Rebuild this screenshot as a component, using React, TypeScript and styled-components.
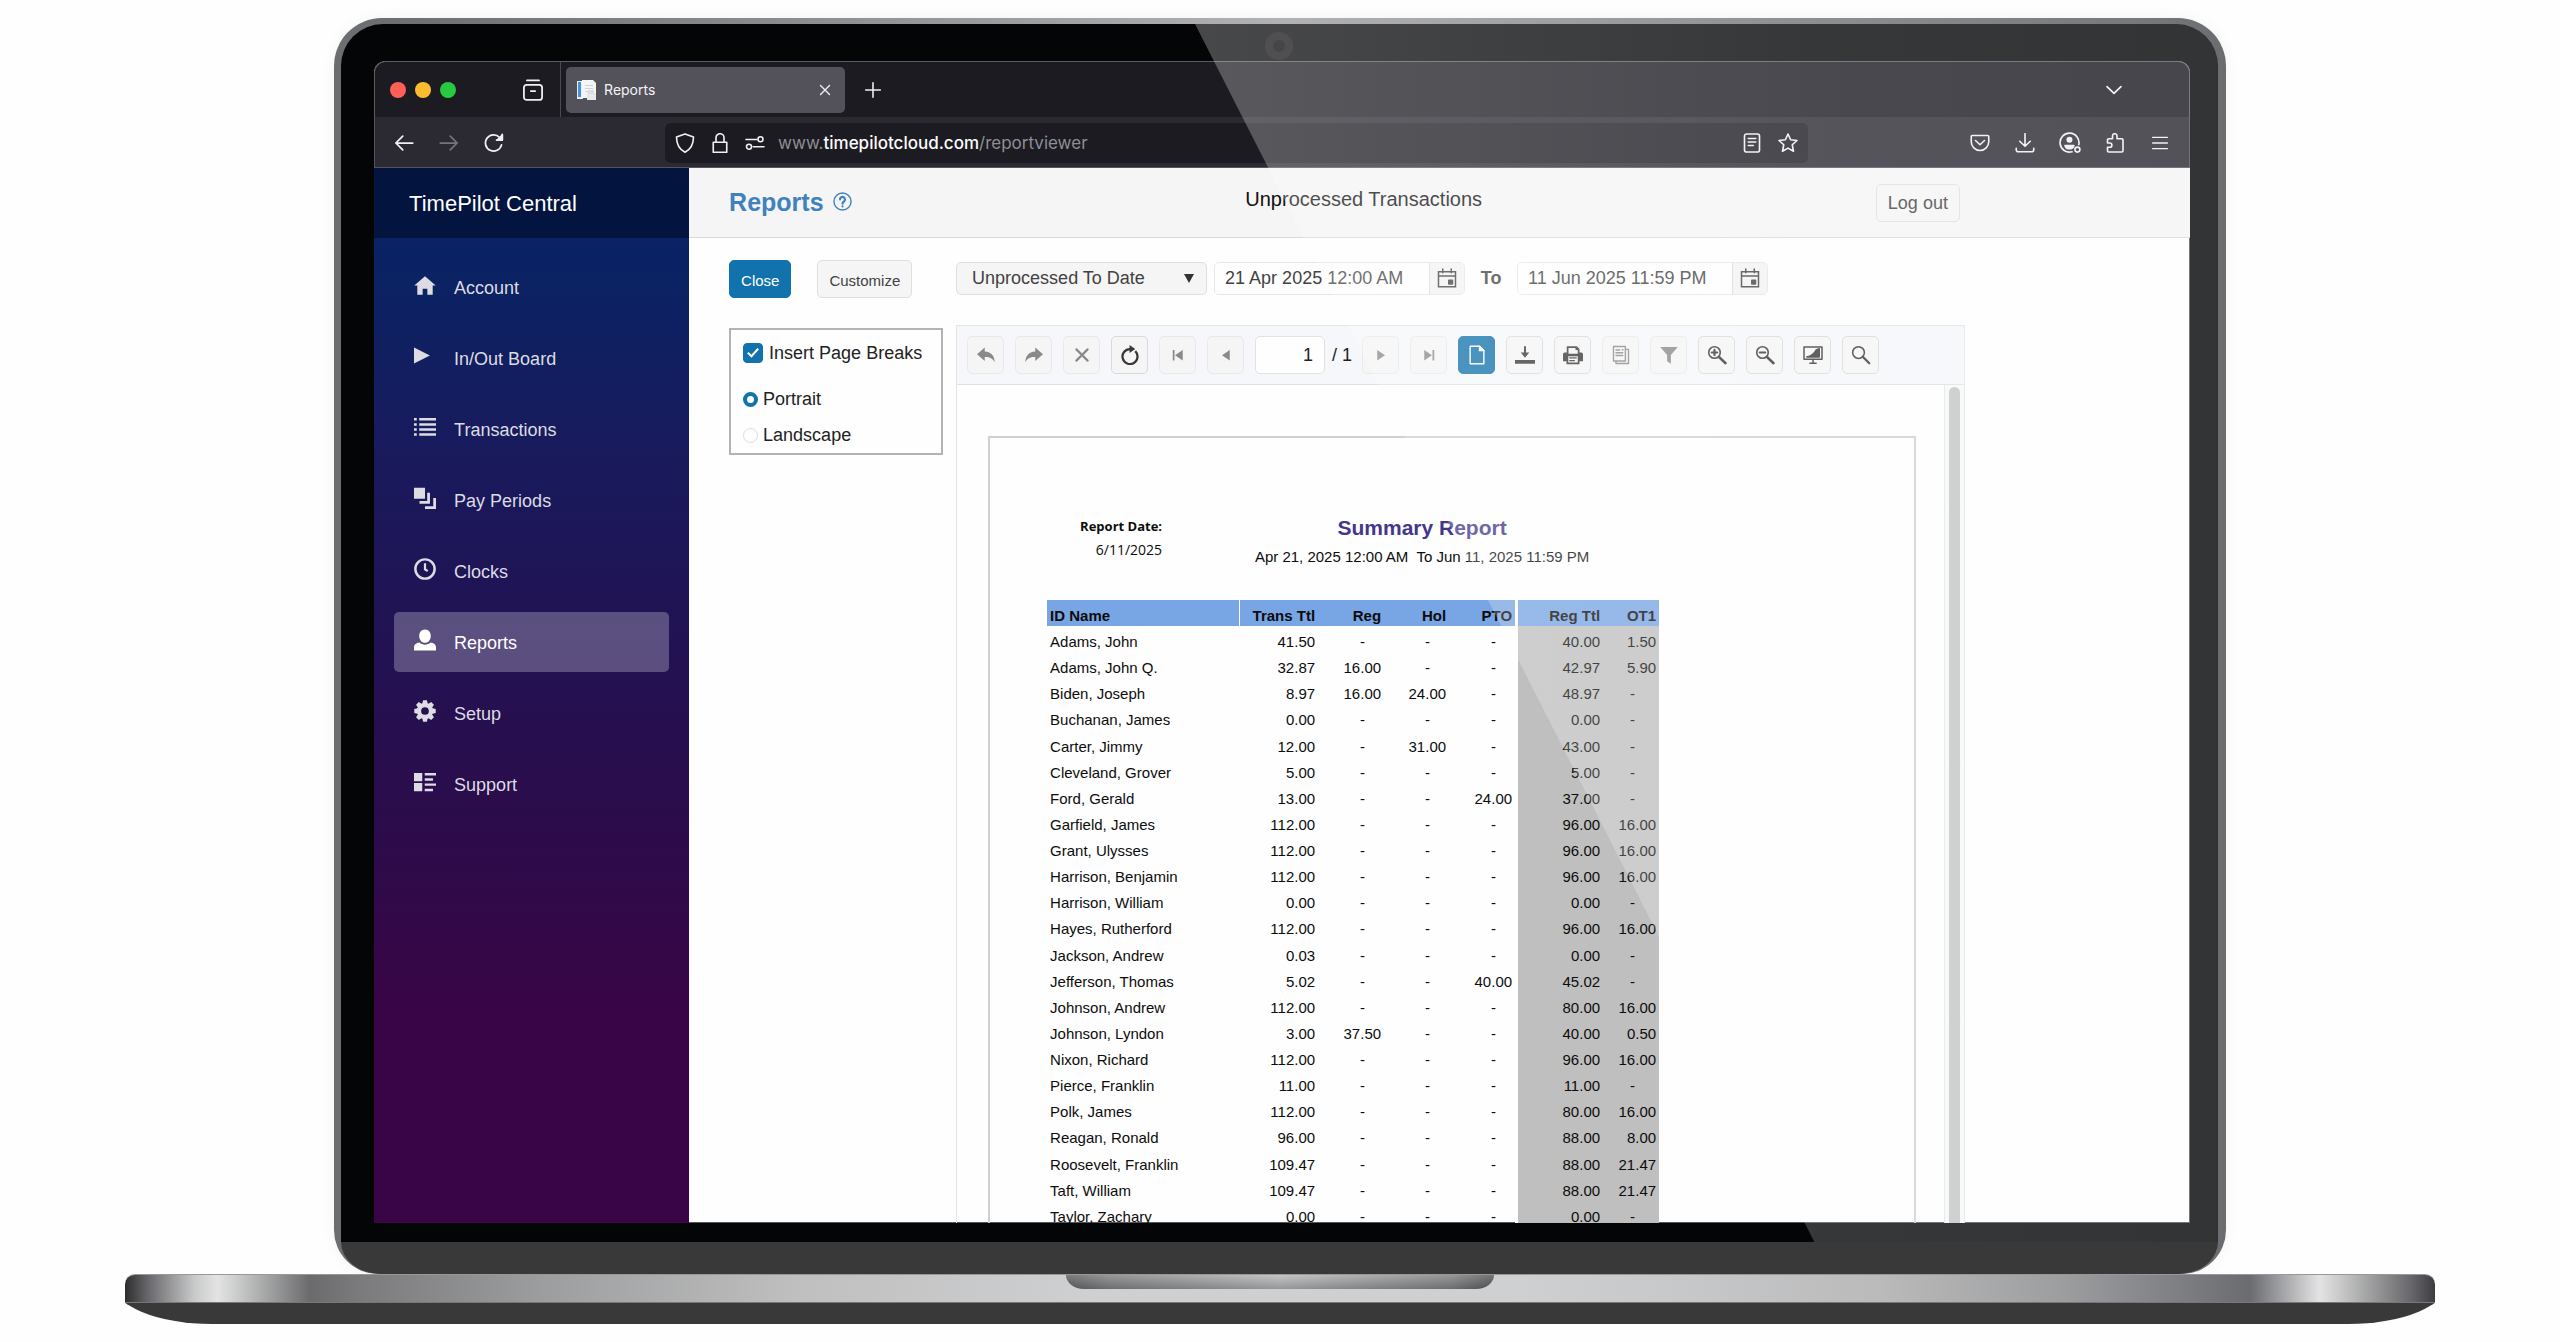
import React, { useState } from "react";
import styled, { createGlobalStyle, css } from "styled-components";

const sans = `"Liberation Sans", Arial, Helvetica, sans-serif`;
const chromeFont = `Inter, "Liberation Sans", sans-serif`;

const GlobalStyle = createGlobalStyle`
  *, *::before, *::after { box-sizing: border-box; }
  html, body { margin: 0; padding: 0; }
  body { background: #fefefe; font-family: ${sans}; color: #222; overflow: hidden; }
  button, input, select { font: inherit; color: inherit; margin: 0; }
  button { cursor: pointer; padding: 0; }
  a { color: inherit; text-decoration: none; }
`;

/* ---------- Laptop ---------- */

const Stage = styled.div`
  height: 100vh;
  min-height: 600px;
  padding: 18px 0;
  display: flex;
  flex-direction: column;
  align-items: center;
`;

const Lid = styled.div`
  flex: 1;
  min-height: 0;
  width: 73.9%;
  display: flex;
  flex-direction: column;
  padding: 6px 8px 0 7px;
  border-radius: 48px 48px 44px 44px;
  background: linear-gradient(90deg, #6b6d71 0%, #6f7073 4%, #b2b2b3 50%, #77787b 96%, #6b6c70 100%);
  box-shadow: 0 0 14px rgba(0, 0, 0, 0.05);
`;

const Panel = styled.div`
  position: relative;
  flex: 1;
  min-height: 0;
  display: flex;
  padding: 37px 28px 19px 33px;
  border-radius: 42px 42px 0 0;
  background: #040507;
`;

const Hinge = styled.div`
  height: 32px;
  background: #393939;
  border-radius: 0 0 40px 40px / 0 0 32px 32px;
`;

const Camera = styled.div`
  position: absolute;
  left: 50%;
  top: 8px;
  width: 28px;
  height: 28px;
  margin-left: -14px;
  border-radius: 50%;
  border: 8px solid #121216;
  background: #050508;
`;

const Glare = styled.div`
  position: absolute;
  inset: 0;
  z-index: 5;
  pointer-events: none;
  border-radius: 0 42px 0 0;
  background: linear-gradient(90deg, rgba(254, 254, 254, 0.27) 45%, rgba(252, 253, 254, 0.2) 80%, rgba(252, 253, 254, 0.19) 100%);
  clip-path: polygon(45.5% 0, 100% 0, 100% 100%, 78.5% 100%);
`;

const Base = styled.div`
  position: relative;
  width: 90.2%;
  height: 29px;
  border-radius: 10px 10px 0 0;
  border-top: 1px solid #98989a;
  border-bottom: 1px solid #77777a;
  background: linear-gradient(
    90deg,
    #2d2d2e 0%, #68686c 1%, #c8c9c9 3%, #e3e3e3 4%, #c6c8c7 5%, #6b6b6e 8%, #7a7a7d 10%, #9c9d9f 18%,
    #bfbfbf 29%, #cfd0d2 42%, #cfd0d2 60%, #c6c7c9 68%, #bababa 76%, #9c9d9f 84%, #6b6c70 92%,
    #e3e3e5 95%, #c5c6c5 96%, #66666a 99%, #3d3c41 100%
  );
  display: flex;
  justify-content: center;
`;

const Notch = styled.div`
  width: 428px;
  height: 14px;
  border-radius: 0 0 18px 18px / 0 0 14px 14px;
  background: linear-gradient(180deg, rgba(255, 255, 255, 0.12), rgba(0, 0, 0, 0.2)),
    linear-gradient(90deg, #68696c 0%, #88898b 10%, #bcbdbf 50%, #88898b 90%, #5f6063 100%);
`;

const Underside = styled.div`
  position: relative;
  width: 90.2%;
  height: 21px;
  overflow: hidden;
  &::before {
    content: "";
    position: absolute;
    inset: -21px -13px 0;
    background: #393939;
    border-radius: 0 0 100px 100px / 0 0 42px 42px;
  }
`;

/* ---------- Browser ---------- */

const Browser = styled.div`
  flex: 1;
  min-width: 0;
  display: flex;
  flex-direction: column;
  overflow: hidden;
  border-radius: 12px 12px 0 0;
  background: #fefefe;
  box-shadow: inset 0 0 0 1px #55555c;
`;

const TabStrip = styled.div`
  height: 56px;
  flex: none;
  display: flex;
  align-items: center;
  background: #1c1b22;
  border: 1px solid #5b5b61;
  border-bottom: 0;
  border-radius: 12px 12px 0 0;
  color: #f4f4f6;
  font-family: ${chromeFont};
`;

const Lights = styled.div`
  display: flex;
  gap: 9px;
  width: 132px;
  padding-left: 15px;
`;

const Light = styled.span<{ $c: string }>`
  width: 16px;
  height: 16px;
  border-radius: 50%;
  background: ${(p) => p.$c};
`;

const ChromeButton = styled.button<{ $dim?: boolean; $w?: number }>`
  width: ${(p) => p.$w ?? 45}px;
  height: 36px;
  flex: none;
  display: flex;
  align-items: center;
  justify-content: center;
  border: 0;
  background: none;
  color: ${(p) => (p.$dim ? "#75747c" : "#f0f0f3")};
`;

const TabDivider = styled.span`
  align-self: stretch;
  width: 1px;
  margin-left: 2px;
  background: #4b4a52;
`;

const Tab = styled.div`
  display: flex;
  align-items: center;
  width: 279px;
  height: 46px;
  margin: 0 5px;
  padding: 0 2px 0 10px;
  border-radius: 5px;
  background: #53525b;
  font-size: 14px;
  span { flex: 1; margin-left: 7px; }
`;

const Spacer = styled.div`
  flex: 1;
`;

const NavBar = styled.div`
  height: 51px;
  flex: none;
  display: flex;
  align-items: center;
  padding-top: 1px;
  background: #2b2a33;
  border: solid #55545c;
  border-width: 0 1px 1px;
  color: #f0f0f3;
  font-family: ${chromeFont};
`;

const NavGroup = styled.div`
  display: flex;
  width: 290px;
  padding-left: 6px;
`;

const UrlBar = styled.div`
  flex: 1;
  display: flex;
  align-items: center;
  height: 40px;
  padding: 0 2px;
  border-radius: 6px;
  background: #1c1b22;
`;

const Url = styled.div`
  flex: 1;
  margin-left: 6px;
  font-size: 17px;
  color: #8f8e96;
  b { font-weight: 500; color: #fbfbfe; }
`;

const ToolGroup = styled.div`
  display: flex;
  justify-content: flex-end;
  width: 381px;
  padding-right: 6px;
`;

/* ---------- App shell ---------- */

const Page = styled.div`
  flex: 1;
  min-height: 0;
  display: flex;
`;

const Sidebar = styled.aside`
  width: 21%;
  max-width: 315px;
  min-width: 260px;
  display: flex;
  flex-direction: column;
  color: #dcdce2;
  background: linear-gradient(180deg, #062466 0%, #0c2263 12%, #171b5d 25%, #221253 45%, #2c0c4b 62%, #390546 80%, #390546 100%);
`;

const Brand = styled.div`
  height: 70px;
  flex: none;
  display: flex;
  align-items: center;
  padding: 2px 0 0 35px;
  background: #03143e;
  color: #fff;
  font-size: 22px;
`;

const Menu = styled.nav`
  display: flex;
  flex-direction: column;
  gap: 11px;
  padding: 19px 20px;
`;

const MenuItem = styled.a<{ $active?: boolean }>`
  display: flex;
  align-items: center;
  gap: 18px;
  height: 60px;
  padding-left: 20px;
  border-radius: 5px;
  font-size: 18px;
  color: ${(p) => (p.$active ? "#fff" : "#dcdce2")};
  background: ${(p) => (p.$active ? "rgba(255,255,255,.26)" : "none")};
  svg { margin-bottom: 4px; }
  span { padding-top: 2px; }
`;

const Main = styled.main`
  flex: 1;
  min-width: 0;
  display: flex;
  flex-direction: column;
`;

const Header = styled.header`
  height: 70px;
  flex: none;
  display: flex;
  align-items: center;
  justify-content: space-between;
  padding: 0 230px 0 40px;
  background: #f5f5f5;
  border-bottom: 1px solid #d9d9db;
`;

const Title = styled.h1`
  display: flex;
  align-items: center;
  gap: 9px;
  margin: 0;
  padding-bottom: 2px;
  font-size: 25px;
  line-height: 30px;
  font-weight: 700;
  color: #3f82bd;
`;

const Subtitle = styled.h2`
  margin: 0;
  padding-bottom: 8px;
  font-size: 20px;
  line-height: 24px;
  font-weight: 400;
  color: #111;
`;

const Button = styled.button<{ $primary?: boolean; $large?: boolean }>`
  height: 38px;
  padding: 2px 11px 0;
  border-radius: 5px;
  font-size: ${(p) => (p.$large ? 18 : 15)}px;
  border: 1px solid ${(p) => (p.$primary ? "#1272ac" : "#dfdfe0")};
  background: ${(p) => (p.$primary ? "#1272ac" : "#f5f5f5")};
  color: ${(p) => (p.$primary ? "#fff" : "#424242")};
`;

const Content = styled.div`
  flex: 1;
  min-height: 0;
  display: grid;
  grid-template-columns: 214px minmax(0, 1fr);
  grid-template-rows: 65px minmax(0, 1fr);
  column-gap: 13px;
  padding: 22px 15% 0 40px;
`;

const Actions = styled.div`
  display: flex;
  align-items: flex-start;
  gap: 26px;
`;

const Filters = styled.div`
  display: flex;
  align-items: center;
  height: 36px;
  color: #424242;
  font-size: 18px;
  b { width: 52px; text-align: center; font-weight: 700; }
`;

const SelectWrap = styled.div`
  position: relative;
  width: 251px;
  margin-right: 7px;
  svg { position: absolute; right: 13px; top: 12px; pointer-events: none; }
`;

const Select = styled.select`
  appearance: none;
  width: 100%;
  height: 33px;
  padding: 0 15px;
  border: 1px solid #dfdfe0;
  border-radius: 5px;
  background: #f5f5f5;
`;

const DateBox = styled.div`
  display: flex;
  width: 251px;
  height: 33px;
  border: 1px solid #e6e6e7;
  border-radius: 5px;
  overflow: hidden;
  input { flex: 1; min-width: 0; padding: 0 0 0 10px; border: 0; background: #fefefe; }
  button {
    width: 35px;
    border: 0;
    border-left: 1px solid #dcdcdc;
    background: #f3f3f3;
    display: flex;
    align-items: center;
    justify-content: center;
  }
`;

const Options = styled.fieldset`
  align-self: start;
  margin: 3px 0 0;
  padding: 7px 0 0 12px;
  min-width: 0;
  border: 2px solid #b3b3b3;
  font-size: 18px;
  color: #222;
`;

const Option = styled.label<{ $check?: boolean }>`
  display: flex;
  align-items: center;
  gap: ${(p) => (p.$check ? 6 : 5)}px;
  height: 36px;
  ${(p) => p.$check && css`height: 32px; margin-bottom: 12px;`}
`;

const Check = styled.input`
  appearance: none;
  position: relative;
  width: 20px;
  height: 20px;
  border-radius: 4px;
  border: 1px solid #1272ac;
  background: #fff;
  &:checked { background: #1272ac; }
  &:checked::after {
    content: "";
    position: absolute;
    left: 6px;
    top: 2px;
    width: 6px;
    height: 11px;
    border: solid #fff;
    border-width: 0 2px 2px 0;
    transform: rotate(42deg);
  }
`;

const Radio = styled.input`
  appearance: none;
  width: 15px;
  height: 15px;
  border-radius: 50%;
  border: 1px solid #dedede;
  background: #fefefe;
  &:checked { border: 4px solid #1272ac; }
`;

/* ---------- Report viewer ---------- */

const Viewer = styled.section`
  min-height: 0;
  display: flex;
  flex-direction: column;
  border: solid #e3e4e6;
  border-width: 1px 1px 0;
`;

const Toolbar = styled.div`
  height: 59px;
  flex: none;
  display: flex;
  align-items: center;
  gap: 11px;
  padding-left: 10px;
  background: #f6f7fa;
  border-bottom: 1px solid #dfe0e4;
`;

const ToolButton = styled.button<{ $off?: boolean; $on?: boolean }>`
  width: 37px;
  height: 38px;
  flex: none;
  display: flex;
  align-items: center;
  justify-content: center;
  border: 1px solid ${(p) => (p.$on ? "#1272ac" : p.$off ? "#e9e9eb" : "#dadadb")};
  border-radius: 5px;
  background: ${(p) => (p.$on ? "#1272ac" : "#f5f5f6")};
  color: ${(p) => (p.$on ? "#fff" : p.$off ? "#8a8a8a" : "#383838")};
`;

const Pager = styled.label`
  display: flex;
  align-items: center;
  gap: 7px;
  width: 96px;
  font-size: 18px;
  color: #222;
  white-space: nowrap;
  input {
    width: 70px;
    height: 38px;
    padding: 0 11px 0 0;
    text-align: right;
    border: 1px solid #e2e2e4;
    border-radius: 5px;
    background: #fefefe;
  }
`;

const ViewerBody = styled.div`
  flex: 1;
  min-height: 0;
  display: grid;
  grid-template-columns: minmax(0, 1fr) 20px;
  overflow: hidden;
`;

const PaperArea = styled.div`
  padding: 51px 28px 0 31px;
`;

const Track = styled.div`
  padding: 2px 4px;
  background: #f7f8fa;
  border-left: 1px solid #e6e6e8;
`;

const Thumb = styled.div`
  height: 82%;
  width: 11px;
  border-radius: 6px;
  background: #c4c5c5;
`;

const Paper = styled.article`
  min-height: 1100px;
  padding: 75px 0 0 57px;
  border: 2px solid #cfd0d0;
  color: #0c0c0c;
  font-size: 15px;
`;

const ReportHead = styled.div`
  display: grid;
  grid-template-columns: 115px 472px;
  column-gap: 24px;
  margin-bottom: 29px;
`;

const ReportDate = styled.div`
  display: flex;
  flex-direction: column;
  padding-top: 2px;
  text-align: right;
  white-space: nowrap;
  font-family: "Open Sans", "Noto Sans", sans-serif;
  font-size: 13px;
  line-height: 23px;
  span { font-size: 14px; }
`;

const ReportTitle = styled.div`
  text-align: center;
  line-height: 29px;
  white-space: pre;
  h3 { margin: 0; font-size: 21px; line-height: 29px; color: #43378c; }
`;

const Table = styled.table`
  width: 612px;
  height: 627px;
  table-layout: fixed;
  border-collapse: separate;
  border-spacing: 0;
  line-height: 20px;
`;

const cell = css`
  height: 26px;
  padding: 6px 3px 0;
  white-space: nowrap;
`;

const Th = styled.th<{ $w: number; $left?: boolean; $group?: boolean }>`
  ${cell}
  width: ${(p) => p.$w}px;
  text-align: ${(p) => (p.$left ? "left" : "right")};
  background: #78a5e3;
  ${(p) => p.$left && css`border-right: 1px solid #fefefe;`}
  ${(p) => p.$group && css`border-left: 3px solid #fefefe;`}
`;

const Td = styled.td<{ $left?: boolean; $group?: boolean; $grey?: boolean; $dash?: boolean; $last?: boolean }>`
  ${cell}
  text-align: ${(p) => (p.$left ? "left" : "right")};
  ${(p) => p.$dash && css`padding-right: ${p.$last ? 24 : 19}px;`}
  ${(p) => p.$grey && css`background: #bfbfbf;`}
  ${(p) => p.$group && css`border-left: 3px solid #fefefe;`}
`;

/* ---------- Icons ---------- */

type IconProps = { size?: number; w?: number; children: React.ReactNode };

const Line = ({ size = 20, w = 1.3, children }: IconProps) => (
  <svg width={size} height={size} viewBox="0 0 16 16" fill="none" stroke="currentColor" strokeWidth={w} strokeLinecap="round" strokeLinejoin="round" aria-hidden="true">
    {children}
  </svg>
);

const Solid = ({ size = 20, children }: IconProps) => (
  <svg width={size} height={size} viewBox="0 0 16 16" fill="currentColor" aria-hidden="true">
    {children}
  </svg>
);

const Favicon = () => (
  <svg width="21" height="21" viewBox="0 0 21 21" aria-hidden="true">
    <path d="M1 2h6v18H1z" fill="#e9eef4" />
    <path d="M2 3h3v15H2z" fill="#4a90d6" />
    <path d="M6 1h11l3 3v15H6z" fill="#f4f5f6" />
    <path d="M9 6h8v1H9zM9 9h8v1H9zM9 12h5v1H9z" fill="#cdd2d6" />
    <path d="M11 14h9v7h-9z" fill="#e6e9eb" />
    <path d="M12 11h6v4h-6z" fill="#d9dddf" />
  </svg>
);

const menu = [
  { name: "Account", icon: <path d="M8 1.6.2 8.4h2.2V15h3.9v-4.3h3.4V15h3.9V8.4h2.2z" /> },
  { name: "In/Out Board", icon: <path d="M0 1.8v11.6L11.6 7.6z" /> },
  {
    name: "Transactions",
    icon: <path d="M0 1.5h2v1.8H0zM0 5.2h2V7H0zM0 8.9h2v1.8H0zM0 12.6h2v1.8H0zM3.8 1.5H16v1.8H3.8zM3.8 5.2H16V7H3.8zM3.8 8.9H16v1.8H3.8zM3.8 12.6H16v1.8H3.8z" />,
  },
  { name: "Pay Periods", icon: <path d="M0 .6h8v8H0zM9.600 4.200h2v8H4v-2h5.600zM14 8h2v8H8v-2h6z" /> },
  {
    name: "Clocks",
    icon: (
      <>
        <circle cx="8" cy="8" r="7" fill="none" stroke="currentColor" strokeWidth="1.8" />
        <path d="M7.200 3.800h1.600v4l1.600 1-.8 1.400-2.400-1.500z" />
      </>
    ),
  },
  { name: "Reports", icon: <path d="M8 .4c2.500 0 4.200 2 4.200 4.600S10.500 10 8 10 3.800 7.600 3.800 5 5.500.4 8 .4zM0 15.600v-2.200C0 11.400 1.700 10 4 9.800c1 1 2.400 1.600 4 1.600s3-.6 4-1.600c2.300.2 4 1.600 4 3.600v2.200z" /> },
  {
    name: "Setup",
    icon: (
      <>
        <circle cx="8" cy="8" r="4.300" fill="none" stroke="currentColor" strokeWidth="3" />
        {[0, 45, 90, 135, 180, 225, 270, 315].map((a) => (
          <path key={a} d="M6.600.2h2.800l.7 3H5.900z" transform={`rotate(${a} 8 8)`} />
        ))}
      </>
    ),
  },
  {
    name: "Support",
    icon: <path d="M0 1.400h6v6H0zM0 8.700h6v6H0zM7.800 1.400H16v1.800H7.800zM7.800 5.300h6v1.800h-6zM7.800 9H16v1.800H7.800zM7.800 12.900h6v1.800h-6z" />,
  },
];

const CalendarIcon = () => (
  <Line w={1.2}>
    <path d="M1.200 3h13.600v12H1.200zM1.200 6.300h13.600M4.600.8v3M11.400.8v3" strokeLinejoin="miter" />
    <path d="M9.400 9.800h3v3h-3z" fill="currentColor" />
  </Line>
);

const tools: { name: string; off?: boolean; on?: boolean; icon: React.ReactNode }[] = [
  { name: "Navigate backward", off: true, icon: <Solid><path d="M7 2 .8 7.400 7 12.800V9.600c3.600-.2 6.200.8 8 4.200-.2-5-2.600-8.400-8-8.700z" /></Solid> },
  { name: "Navigate forward", off: true, icon: <Solid><path d="m9 2 6.200 5.400L9 12.800V9.600c-3.600-.2-6.200.8-8 4.200.2-5 2.600-8.400 8-8.700z" /></Solid> },
  { name: "Stop rendering", off: true, icon: <Line w={1.7}><path d="m3.500 3.500 9 9m0-9-9 9" /></Line> },
  { name: "Refresh", icon: <Solid><path d="M12.200 4.900A6 6 0 1 1 8 3.200" fill="none" stroke="currentColor" strokeWidth="1.800" /><path d="M7.600 0v6.400l4.600-3.200z" /></Solid> },
  { name: "First page", off: true, icon: <Solid><path d="M3.800 4h1.400v8.400H3.800zM11.800 4v8.400L5.600 8.200z" /></Solid> },
  { name: "Previous page", off: true, icon: <Solid><path d="M11 4v8.400L4.800 8.200z" /></Solid> },
];

const tools2: typeof tools = [
  { name: "Next page", off: true, icon: <Solid><path d="M5 4v8.400l6.200-4.200z" /></Solid> },
  { name: "Last page", off: true, icon: <Solid><path d="M10.800 4h1.400v8.400h-1.400zM4.200 4v8.400l6.200-4.200z" /></Solid> },
  { name: "Print preview", on: true, icon: <Line w={1.1}><path d="M2.500 1h7.500l3.500 3.500V15h-11z" /><path d="M10 1v3.500h3.500z" fill="currentColor" /></Line> },
  { name: "Export", icon: <Solid><path d="M7.200 1h1.600v5h2.600L8 10.200 4.600 6h2.600zM0 12h16v3H0z" /></Solid> },
  { name: "Print", icon: <Solid><path d="M3 1h8l2.200 2.200V6H15l1 1v6h-2.800v2.400H2.800V13H0V7l1-1h2zM4.400 2.300V7h7.400V4H10V2.300zM4.200 9v5h7.600V9z" fillRule="evenodd" /><path d="M5 9.800h6v1H5zM5 12h4.500v1H5z" /></Solid> },
  { name: "Document map", off: true, icon: <Line w={1.1}><path d="M2 1.200h9.500v11.600H2zM4 13v1.800h10V3.500h-2.300M4 4h3M4 6.200h5.400M4 8.400h5.400M9 3.800h.6" /></Line> },
  { name: "Parameters", off: true, icon: <Solid><path d="M1 1.500h14L9.500 8v7l-3-2V8z" /></Solid> },
  { name: "Zoom in", icon: <Line w={1.3}><circle cx="6" cy="6" r="4.600" /><path d="m9.600 9.600 5.200 5" strokeWidth="2" /><path d="M3.800 6h4.400M6 3.800v4.400" strokeWidth="1.700" /></Line> },
  { name: "Zoom out", icon: <Line w={1.3}><circle cx="6" cy="6" r="4.600" /><path d="m9.600 9.600 5.200 5" strokeWidth="2" /><path d="M3.800 6h4.400" strokeWidth="1.700" /></Line> },
  { name: "Fit to screen", icon: <Line w={1.2}><path d="M.8 1.500h14.400v9.800H.8zM5.500 14.500h5M8 12v2.500" /><path d="M3 9.600C6 9 9 7 10.500 4L13 3v6.600z" fill="currentColor" /></Line> },
  { name: "Search", icon: <Line w={1.2}><circle cx="6" cy="6" r="4.700" /><path d="m9.600 9.600 5 5" strokeWidth="1.800" /></Line> },
];

/* ---------- Data ---------- */

const columns = [
  { label: "ID Name", w: 193 },
  { label: "Trans Ttl", w: 78 },
  { label: "Reg", w: 66 },
  { label: "Hol", w: 65 },
  { label: "PTO", w: 66 },
  { label: "Reg Ttl", w: 88 },
  { label: "OT1", w: 56 },
];

const rows: string[][] = [
  ["Adams, John", "41.50", "-", "-", "-", "40.00", "1.50"],
  ["Adams, John Q.", "32.87", "16.00", "-", "-", "42.97", "5.90"],
  ["Biden, Joseph", "8.97", "16.00", "24.00", "-", "48.97", "-"],
  ["Buchanan, James", "0.00", "-", "-", "-", "0.00", "-"],
  ["Carter, Jimmy", "12.00", "-", "31.00", "-", "43.00", "-"],
  ["Cleveland, Grover", "5.00", "-", "-", "-", "5.00", "-"],
  ["Ford, Gerald", "13.00", "-", "-", "24.00", "37.00", "-"],
  ["Garfield, James", "112.00", "-", "-", "-", "96.00", "16.00"],
  ["Grant, Ulysses", "112.00", "-", "-", "-", "96.00", "16.00"],
  ["Harrison, Benjamin", "112.00", "-", "-", "-", "96.00", "16.00"],
  ["Harrison, William", "0.00", "-", "-", "-", "0.00", "-"],
  ["Hayes, Rutherford", "112.00", "-", "-", "-", "96.00", "16.00"],
  ["Jackson, Andrew", "0.03", "-", "-", "-", "0.00", "-"],
  ["Jefferson, Thomas", "5.02", "-", "-", "40.00", "45.02", "-"],
  ["Johnson, Andrew", "112.00", "-", "-", "-", "80.00", "16.00"],
  ["Johnson, Lyndon", "3.00", "37.50", "-", "-", "40.00", "0.50"],
  ["Nixon, Richard", "112.00", "-", "-", "-", "96.00", "16.00"],
  ["Pierce, Franklin", "11.00", "-", "-", "-", "11.00", "-"],
  ["Polk, James", "112.00", "-", "-", "-", "80.00", "16.00"],
  ["Reagan, Ronald", "96.00", "-", "-", "-", "88.00", "8.00"],
  ["Roosevelt, Franklin", "109.47", "-", "-", "-", "88.00", "21.47"],
  ["Taft, William", "109.47", "-", "-", "-", "88.00", "21.47"],
  ["Taylor, Zachary", "0.00", "-", "-", "-", "0.00", "-"],
];

/* ---------- Sections ---------- */

const BrowserChrome = () => (
  <>
    <TabStrip>
      <Lights>
        <Light $c="#fe5f57" />
        <Light $c="#febb2e" />
        <Light $c="#28c840" />
      </Lights>
      <ChromeButton aria-label="Recent browsing" $w={51}>
        <Line size={22}><path d="M3.600 1h8.800M1.400 6.200a2 2 0 0 1 2-2h9.200a2 2 0 0 1 2 2v7a2 2 0 0 1-2 2H3.400a2 2 0 0 1-2-2zM6.400 8.800h3.200" /></Line>
      </ChromeButton>
      <TabDivider />
      <Tab>
        <Favicon />
        <span>Reports</span>
        <ChromeButton aria-label="Close tab" $w={36}>
          <Line size={16} w={1.4}><path d="m3.500 3.500 9 9m0-9-9 9" /></Line>
        </ChromeButton>
      </Tab>
      <ChromeButton aria-label="New tab">
        <Line size={18} w={1.4}><path d="M8 1.500v13M1.500 8h13" /></Line>
      </ChromeButton>
      <Spacer />
      <ChromeButton aria-label="List all tabs" $w={150}>
        <Line size={18} w={1.5}><path d="m1.800 5 6.200 6 6.200-6" /></Line>
      </ChromeButton>
    </TabStrip>
    <NavBar>
      <NavGroup>
        <ChromeButton aria-label="Back"><Line w={1.4}><path d="M15 8H1.500M7 2.500 1.500 8 7 13.500" /></Line></ChromeButton>
        <ChromeButton aria-label="Forward" $dim><Line w={1.4}><path d="M1 8h13.500M9 2.500 14.500 8 9 13.500" /></Line></ChromeButton>
        <ChromeButton aria-label="Reload"><Line w={1.4}><path d="M14 9.500A6.500 6.500 0 1 1 12.500 3.600l1.500 1.600M14.600 1v4.600H10" /><path d="M14.600 1.600v4h-4z" fill="currentColor" /></Line></ChromeButton>
      </NavGroup>
      <UrlBar>
        <ChromeButton aria-label="Tracking protection" $w={35}><Line><path d="M8 .8 1.200 3.200C1.200 8.600 3 12.800 8 15.400c5-2.600 6.800-6.800 6.800-12.200z" /></Line></ChromeButton>
        <ChromeButton aria-label="Connection secure" $w={35}><Line><path d="M2.600 7.400h10.800v8H2.600zM4.800 7.400V3.800a3.200 3.200 0 0 1 6.400 0v3.600" /></Line></ChromeButton>
        <ChromeButton aria-label="Permissions" $w={35}><Line><path d="M.8 5.200h8.600M6.600 11h8.600" /><circle cx="12.400" cy="5" r="2" /><circle cx="3.200" cy="11" r="2" /></Line></ChromeButton>
        <Url>www.<b>timepilotcloud.com</b>/reportviewer</Url>
        <ChromeButton aria-label="Reader view" $w={36}><Line><path d="M2 2.400A1.600 1.600 0 0 1 3.600.8h8.800A1.600 1.600 0 0 1 14 2.400v11.200a1.600 1.600 0 0 1-1.600 1.600H3.600A1.600 1.600 0 0 1 2 13.600zM5 4.400h6M5 7.200h6M5 10h4" /></Line></ChromeButton>
        <ChromeButton aria-label="Bookmark" $w={36}><Line><path d="m8 .8 2.100 4.600 5.100.6-3.800 3.400 1 5.200L8 12.100l-4.400 2.500 1-5.200L.8 6l5.100-.6z" /></Line></ChromeButton>
      </UrlBar>
      <ToolGroup>
        <ChromeButton aria-label="Save to Pocket"><Line><path d="M1.800 2h12.400a.8.8 0 0 1 .8.800V7A7 7 0 0 1 1 7V2.800a.8.8 0 0 1 .8-.8zM4.400 6 8 9.400 11.600 6" /></Line></ChromeButton>
        <ChromeButton aria-label="Downloads"><Line><path d="M8 .6v9.800M3.800 6.600 8 10.600l4.200-4M1 12.200v1.200a1.600 1.600 0 0 0 1.600 1.600h10.800a1.600 1.600 0 0 0 1.600-1.600v-1.200" /></Line></ChromeButton>
        <ChromeButton aria-label="Account">
          <Line size={22} w={1.2}>
            <path d="M9.500 14.400A6.900 6.900 0 1 1 14.400 9.200" />
            <circle cx="7.600" cy="5.600" r="1.600" fill="currentColor" />
            <path d="M4.400 9.800h6.400c-.4 1.600-1.600 2.400-3.200 2.400s-2.800-.8-3.200-2.400z" fill="currentColor" />
            <circle cx="13.400" cy="12.800" r="1.800" />
          </Line>
        </ChromeButton>
        <ChromeButton aria-label="Extensions"><Line><path d="M6 4.600V2.400a1.700 1.700 0 0 1 3.600 0v2.200h3.800a1 1 0 0 1 1 1v8.600a1 1 0 0 1-1 1H3a1 1 0 0 1-1-1v-2.800h1.800a1.600 1.600 0 0 0 0-3.400H2V5.600a1 1 0 0 1 1-1z" /></Line></ChromeButton>
        <ChromeButton aria-label="Application menu"><Line size={18}><path d="M1.500 3h13M1.500 8h13M1.500 13h13" /></Line></ChromeButton>
      </ToolGroup>
    </NavBar>
  </>
);

const ToolbarButtons = ({ items }: { items: typeof tools }) => (
  <>
    {items.map((t) => (
      <ToolButton key={t.name} aria-label={t.name} $off={t.off} $on={t.on}>
        {t.icon}
      </ToolButton>
    ))}
  </>
);

const SummaryTable = () => (
  <Table>
    <thead>
      <tr>
        {columns.map((c, i) => (
          <Th key={c.label} $w={c.w} $left={i === 0} $group={i === 5}>{c.label}</Th>
        ))}
      </tr>
    </thead>
    <tbody>
      {rows.map((r) => (
        <tr key={r[0]}>
          {r.map((v, i) => (
            <Td key={i} $left={i === 0} $group={i === 5} $grey={i > 4} $dash={v === "-"} $last={i === 6}>{v}</Td>
          ))}
        </tr>
      ))}
    </tbody>
  </Table>
);

export default function App() {
  const [breaks, setBreaks] = useState(true);
  const [orientation, setOrientation] = useState("Portrait");

  return (
    <>
      <GlobalStyle />
      <Stage>
        <Lid>
          <Panel>
            <Camera />
            <Browser>
              <BrowserChrome />
              <Page>
                <Sidebar>
                  <Brand>TimePilot Central</Brand>
                  <Menu>
                    {menu.map((m) => (
                      <MenuItem key={m.name} href="#" $active={m.name === "Reports"}>
                        <Solid size={22}>{m.icon}</Solid>
                        <span>{m.name}</span>
                      </MenuItem>
                    ))}
                  </Menu>
                </Sidebar>
                <Main>
                  <Header>
                    <Title>
                      Reports
                      <Line size={19} w={1.2}>
                        <circle cx="8" cy="8" r="7.200" />
                        <path d="M5.900 6.200a2.100 2.100 0 1 1 3.300 1.800C8.300 8.600 8 8.900 8 9.800M8 12v.2" strokeWidth="1.800" />
                      </Line>
                    </Title>
                    <Subtitle>Unprocessed Transactions</Subtitle>
                    <Button $large>Log out</Button>
                  </Header>
                  <Content>
                    <Actions>
                      <Button $primary>Close</Button>
                      <Button>Customize</Button>
                    </Actions>
                    <Filters>
                      <SelectWrap>
                        <Select aria-label="Date range">
                          <option>Unprocessed To Date</option>
                        </Select>
                        <svg width="10" height="9" viewBox="0 0 10 9" aria-hidden="true"><path d="M0 0h10L5 9z" fill="#333" /></svg>
                      </SelectWrap>
                      <DateBox>
                        <input aria-label="From" defaultValue="21 Apr 2025 12:00 AM" />
                        <button aria-label="Pick start date"><CalendarIcon /></button>
                      </DateBox>
                      <b>To</b>
                      <DateBox>
                        <input aria-label="To" defaultValue="11 Jun 2025 11:59 PM" />
                        <button aria-label="Pick end date"><CalendarIcon /></button>
                      </DateBox>
                    </Filters>
                    <Options>
                      <Option $check>
                        <Check type="checkbox" checked={breaks} onChange={() => setBreaks(!breaks)} />
                        Insert Page Breaks
                      </Option>
                      {["Portrait", "Landscape"].map((o) => (
                        <Option key={o}>
                          <Radio type="radio" name="orientation" checked={orientation === o} onChange={() => setOrientation(o)} />
                          {o}
                        </Option>
                      ))}
                    </Options>
                    <Viewer>
                      <Toolbar>
                        <ToolbarButtons items={tools} />
                        <Pager>
                          <input aria-label="Page number" defaultValue="1" />
                          / 1
                        </Pager>
                        <ToolbarButtons items={tools2} />
                      </Toolbar>
                      <ViewerBody>
                        <PaperArea>
                          <Paper>
                            <ReportHead>
                              <ReportDate>
                                <strong>Report Date:</strong>
                                <span>6/11/2025</span>
                              </ReportDate>
                              <ReportTitle>
                                <h3>Summary Report</h3>
                                {"Apr 21, 2025 12:00 AM  To Jun 11, 2025 11:59 PM"}
                              </ReportTitle>
                            </ReportHead>
                            <SummaryTable />
                          </Paper>
                        </PaperArea>
                        <Track><Thumb /></Track>
                      </ViewerBody>
                    </Viewer>
                  </Content>
                </Main>
              </Page>
            </Browser>
            <Glare />
          </Panel>
          <Hinge />
        </Lid>
        <Base><Notch /></Base>
        <Underside />
      </Stage>
    </>
  );
}
